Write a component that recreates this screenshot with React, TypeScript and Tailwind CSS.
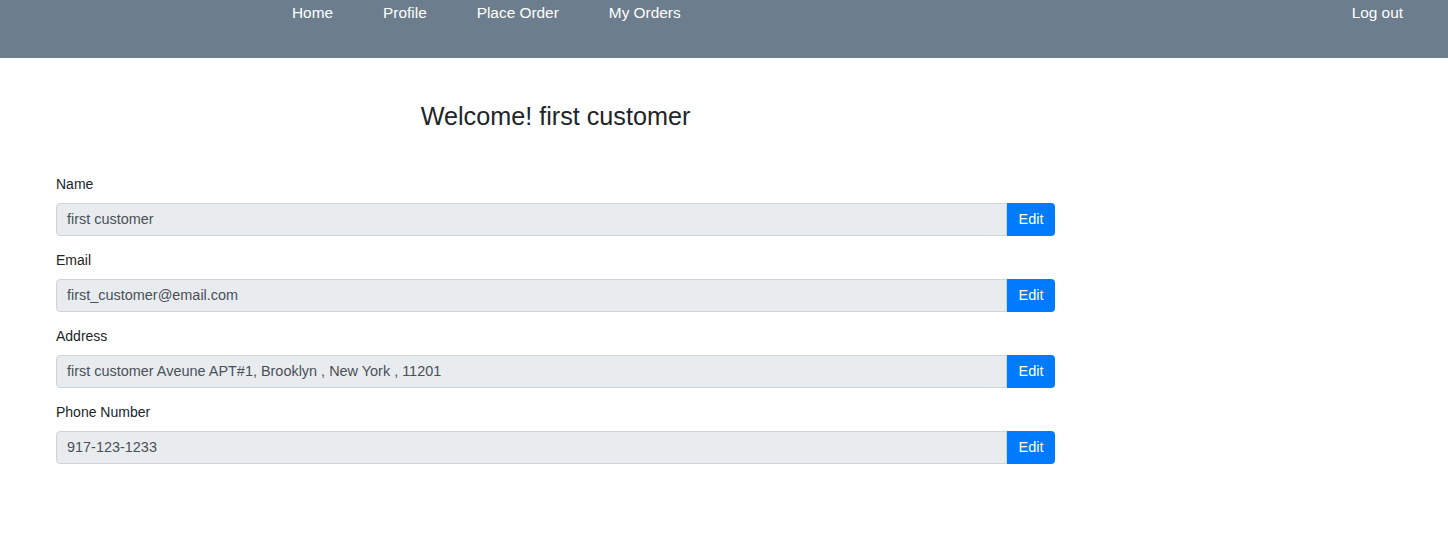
import React from "react";

const fields = [
  { label: "Name", value: "first customer" },
  { label: "Email", value: "first_customer@email.com" },
  { label: "Address", value: "first customer Aveune APT#1, Brooklyn , New York , 11201" },
  { label: "Phone Number", value: "917-123-1233" },
];

export default function App() {
  return (
    <div className="min-h-[540px] bg-white text-[#212529]" style={{ fontFamily: '"Liberation Sans", Arial, sans-serif' }}>
      <nav className="h-[58px] bg-[#6c7d8d] flex items-start text-[15.4px] text-white leading-[26px] pt-0">
        <div className="flex gap-[50px] pl-[292px]">
          <span>Home</span>
          <span>Profile</span>
          <span>Place Order</span>
          <span>My Orders</span>
        </div>
        <div className="ml-auto pr-[45px]">Log out</div>
      </nav>
      <div className="w-[999px] ml-[56px]">
        <h1 className="text-center text-[25.2px] leading-[30px] mt-[43px] mb-[47px]">Welcome! first customer</h1>
        <div className="flex flex-col gap-[18px]">
          {fields.map((f) => (
            <div key={f.label}>
              <div className="text-[14px] leading-[20px] mb-[9px] mt-[-4px]">{f.label}</div>
              <div className="flex h-[33px]">
                <div className="flex-1 flex items-center bg-[#e9ecef] border border-[#ced4da] rounded-l-[4px] pl-[10px] text-[14.45px] text-[#495057]">
                  {f.value}
                </div>
                <button className="w-[48px] bg-[#007bff] text-white text-[14.5px] rounded-r-[4px]">Edit</button>
              </div>
            </div>
          ))}
        </div>
      </div>
    </div>
  );
}
